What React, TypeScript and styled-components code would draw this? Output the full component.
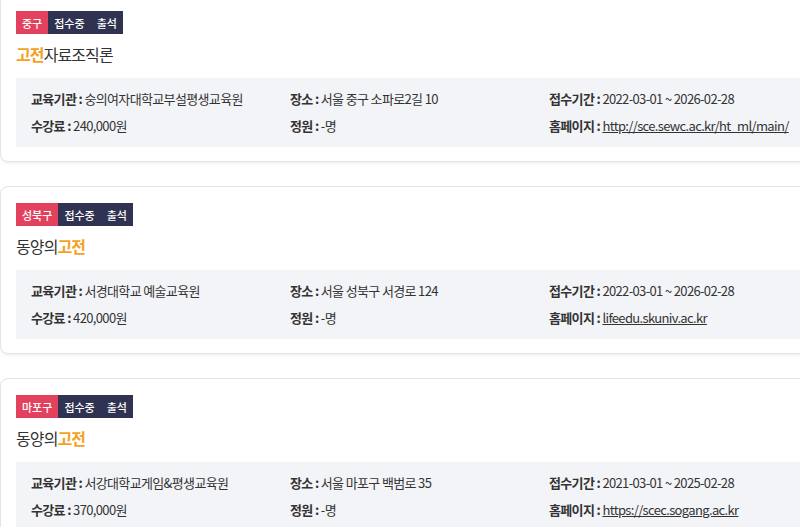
import React from 'react';
import styled, { createGlobalStyle } from 'styled-components';

const GlobalStyle = createGlobalStyle`
  html, body {
    margin: 0;
    padding: 0;
    background: #ffffff;
    overflow: hidden;
  }
  body {
    font-family: 'Noto Sans CJK KR', 'Noto Sans', sans-serif;
    color: #333;
  }
`;

type Course = {
  district: string;
  titleParts: { text: string; hit?: boolean }[];
  org: string;
  fee: string;
  place: string;
  capacity: string;
  period: string;
  homepage: string;
};

const courses: Course[] = [
  {
    district: '중구',
    titleParts: [{ text: '고전', hit: true }, { text: '자료조직론' }],
    org: '숭의여자대학교부설평생교육원',
    fee: '240,000원',
    place: '서울 중구 소파로2길 10',
    capacity: '-명',
    period: '2022-03-01 ~ 2026-02-28',
    homepage: 'http://sce.sewc.ac.kr/ht_ml/main/',
  },
  {
    district: '성북구',
    titleParts: [{ text: '동양의' }, { text: '고전', hit: true }],
    org: '서경대학교 예술교육원',
    fee: '420,000원',
    place: '서울 성북구 서경로 124',
    capacity: '-명',
    period: '2022-03-01 ~ 2026-02-28',
    homepage: 'lifeedu.skuniv.ac.kr',
  },
  {
    district: '마포구',
    titleParts: [{ text: '동양의' }, { text: '고전', hit: true }],
    org: '서강대학교게임&평생교육원',
    fee: '370,000원',
    place: '서울 마포구 백범로 35',
    capacity: '-명',
    period: '2021-03-01 ~ 2025-02-28',
    homepage: 'https://scec.sogang.ac.kr',
  },
];

const App = () => {
  return (
    <>
      <GlobalStyle />
      <List>
        {courses.map((c, i) => (
          <Card key={i}>
            <Tags>
              <Tag $tone="red">{c.district}</Tag>
              <Tag $tone="navy">접수중</Tag>
              <Tag $tone="navy">출석</Tag>
            </Tags>
            <Title>
              {c.titleParts.map((p, j) =>
                p.hit ? <Hit key={j}>{p.text}</Hit> : <span key={j}>{p.text}</span>
              )}
            </Title>
            <InfoBox>
              <InfoItem>
                <Label>교육기관 : </Label>
                {c.org}
              </InfoItem>
              <InfoItem>
                <Label>장소 : </Label>
                {c.place}
              </InfoItem>
              <InfoItem>
                <Label>접수기간 : </Label>
                {c.period}
              </InfoItem>
              <InfoItem>
                <Label>수강료 : </Label>
                {c.fee}
              </InfoItem>
              <InfoItem>
                <Label>정원 : </Label>
                {c.capacity}
              </InfoItem>
              <InfoItem>
                <Label>홈페이지 : </Label>
                <Link href="#">{c.homepage}</Link>
              </InfoItem>
            </InfoBox>
          </Card>
        ))}
      </List>
    </>
  );
};

const List = styled.div`
  display: flex;
  flex-direction: column;
  gap: 24px;
  margin-top: -6px;
  width: 860px;
`;

const Card = styled.div`
  border: 1px solid #e4e4e4;
  border-radius: 8px;
  box-shadow: 0 2px 3px rgba(0, 0, 0, 0.05);
  padding: 16px 15px 14px 15px;
  background: #fff;
`;

const Tags = styled.div`
  display: flex;
  height: 23px;
`;

const Tag = styled.span<{ $tone: 'red' | 'navy' }>`
  display: flex;
  align-items: center;
  padding: 0 6px;
  font-size: 11px;
  font-weight: 500;
  color: #fff;
  background: ${(p) => (p.$tone === 'red' ? '#e2425d' : '#2f3351')};
`;

const Title = styled.div`
  margin-top: 8px;
  font-size: 16px;
  line-height: 24px;
  color: #333;
  letter-spacing: -0.9px;
`;

const Hit = styled.span`
  color: #f4a21e;
  font-weight: 700;
`;

const InfoBox = styled.div`
  margin-top: 12px;
  background: #f3f4f7;
  padding: 11px 15px;
  display: grid;
  grid-template-columns: 259px 259px 1fr;
  row-gap: 7px;
`;

const InfoItem = styled.div`
  font-size: 13px;
  line-height: 20px;
  color: #333;
  letter-spacing: -0.65px;
  white-space: nowrap;
`;

const Label = styled.span`
  font-weight: 700;
`;

const Link = styled.a`
  color: #333;
  text-decoration: underline;
`;

export default App;
